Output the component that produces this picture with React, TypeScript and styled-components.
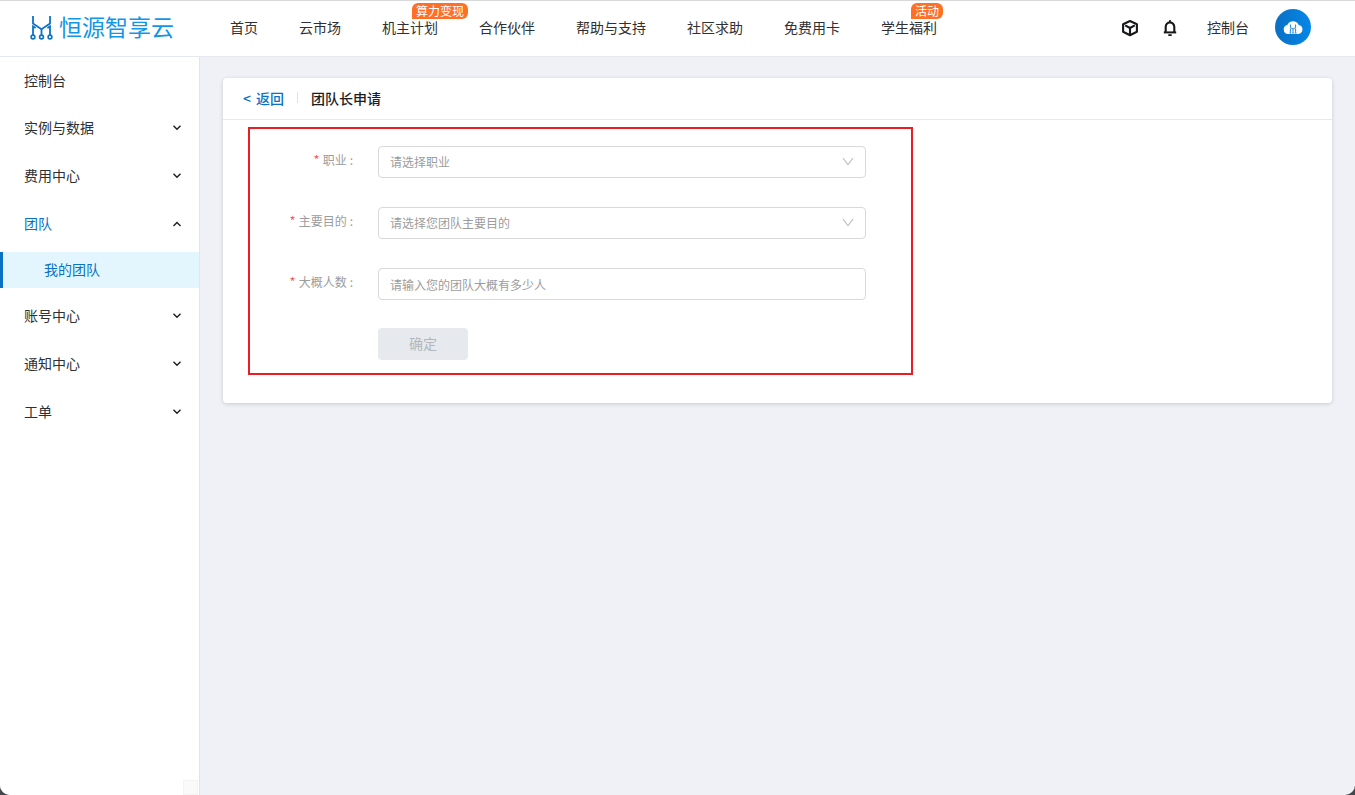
import React from "react";
import styled, { createGlobalStyle, css } from "styled-components";

const GlobalStyle = createGlobalStyle`
  *, *::before, *::after { box-sizing: border-box; }
  body {
    margin: 0;
    background: #43484d;
    color: #2f3033;
    font-family: "Noto Sans CJK SC", sans-serif;
    font-size: 14px;
    font-weight: 400;
    line-height: 20px;
  }
  button, input, select { font: inherit; color: inherit; }
  a { color: inherit; text-decoration: none; }
  svg { display: block; }
`;

const Shell = styled.div`
  display: flex;
  flex-direction: column;
  min-height: 100vh;
  overflow: hidden;
  background: #eff1f6;
  border-radius: 0 0 10px 10px;
`;

const Header = styled.header`
  display: flex;
  align-items: center;
  height: 57px;
  padding: 0 44px 4px 30px;
  background: #fff;
  border-top: 1px solid #d8d8d8;
  border-bottom: 1px solid #e6eaf0;
`;

const Brand = styled.a`
  display: flex;
  align-items: center;
  gap: 6px;
  width: 200px;
  padding-bottom: 2px;
  flex: none;
  font-size: 23px;
  line-height: 32px;
  color: #1296e8;
  white-space: nowrap;
`;

const Nav = styled.nav`
  display: flex;
  flex: 1;
  gap: 41px;
`;

const NavLink = styled.a`
  position: relative;
  line-height: 16px;
  white-space: nowrap;
`;

const Badge = styled.span`
  position: absolute;
  left: 30px;
  bottom: 16px;
  padding: 0 4px;
  border-radius: 6px 6px 6px 0;
  background: #ff6f26;
  color: #fff;
  font-size: 12px;
  line-height: 16px;
`;

const Tools = styled.div`
  display: flex;
  align-items: center;
`;

const IconButton = styled.button`
  width: 20px;
  height: 20px;
  margin-right: 20px;
  padding: 2px 1px 0;
  border: 0;
  background: none;
`;

const ConsoleLink = styled.a`
  margin: 0 26px 0 7px;
`;

const Avatar = styled.button`
  display: block;
  width: 36px;
  height: 36px;
  padding: 0;
  border: 0;
  border-radius: 50%;
  background: linear-gradient(90deg, #0a70c4, #0587e8);
`;

const Body = styled.div`
  display: flex;
  flex: 1;
`;

const Sidebar = styled.aside`
  display: flex;
  flex-direction: column;
  flex: none;
  width: 200px;
  background: #fff;
  border-right: 1px solid #e3e5ea;
`;

const MenuItem = styled.button<{ $active?: boolean; $first?: boolean }>`
  display: flex;
  align-items: center;
  justify-content: space-between;
  height: ${(p) => (p.$first ? 47 : 48)}px;
  padding: 0 17px 0 24px;
  border: 0;
  background: none;
  text-align: left;

  > span {
    padding-bottom: 2px;
    ${(p) => p.$active && css`color: #0a72c4;`}
  }
`;

const SubItem = styled.a`
  display: flex;
  align-items: center;
  height: 36px;
  margin: 4px 0;
  padding: 0 0 2px 41px;
  border-left: 3px solid #0a72c4;
  background: #e3f6fe;
  color: #0a72c4;
`;

const ScrollCorner = styled.div`
  width: 15px;
  height: 15px;
  margin-top: auto;
  margin-right: 1px;
  align-self: flex-end;
  background: #fafafa;
  border: 1px solid #f4f4f4;
`;

const Main = styled.main`
  flex: 1;
  min-width: 0;
  padding: 21px 23px 21px 23px;
`;

const Card = styled.section`
  background: #fff;
  border-radius: 4px;
  box-shadow: 0 1px 4px rgba(0, 0, 0, 0.16);
  padding-bottom: 28px;
`;

const CardHeader = styled.div`
  display: flex;
  align-items: center;
  height: 42px;
  padding: 0 20px 2px;
  border-bottom: 1px solid #e8e8e8;
  color: #1c1d1f;
  font-weight: 500;
`;

const BackLink = styled.a`
  display: flex;
  gap: 5px;
  color: #0a72c4;
`;

const Divider = styled.span`
  width: 1px;
  height: 11px;
  margin: 0 13px;
  background: #e0e2e6;
`;

const Title = styled.h1`
  margin: 0;
  font-size: 14px;
  font-weight: 500;
`;

const Form = styled.form`
  display: flex;
  flex-direction: column;
  gap: 29px;
  max-width: 665px;
  margin: 7px 25px 0;
  padding: 17px 45px 13px 0;
  border: 2px solid #ed1c24;
`;

const Field = styled.div`
  display: grid;
  grid-template-columns: 128px 1fr;
  height: 32px;
`;

const Label = styled.label`
  display: flex;
  justify-content: flex-end;
  gap: 3px;
  padding-right: 25px;
  color: #9c9c9c;
  font-size: 12px;
  line-height: 28px;
`;

const Star = styled.span`
  color: #ff5a5f;
  font-size: 13px;
`;

const SelectWrap = styled.div`
  position: relative;
`;

const control = css`
  display: block;
  width: 100%;
  height: 32px;
  padding: 0 11px 1px;
  border: 1px solid #d9d9d9;
  border-radius: 4px;
  background: #fff;
  color: #9c9c9c;
  font-size: 12px;
  outline: none;
`;

const Select = styled.select`
  ${control}
  appearance: none;
`;

const Input = styled.input`
  ${control}
  padding-top: 1px;
  &::placeholder { color: #9c9c9c; opacity: 1; }
`;

const SelectArrow = styled.svg`
  position: absolute;
  top: 10px;
  right: 12px;
  pointer-events: none;
`;

const Submit = styled.button`
  width: 90px;
  height: 32px;
  margin: -1px 0 0 128px;
  padding: 0 0 2px;
  border: 0;
  border-radius: 4px;
  background: #e6eaee;
  color: #b4b7ba;
`;

const LogoMark = () => (
  <svg width="23" height="28" viewBox="0 0 23 28" fill="none" stroke="#0c74c8" strokeWidth="1.8">
    <path d="M3 4v7.6L11.5 17.2 20 11.6V4" />
    <path d="M3 23.2V14.4L5.6 16M20 23.2V14.4L17.4 16M11.5 17v6.2" />
    <g fill="#fff" strokeWidth="1.6">
      <circle cx="3" cy="25" r="1.9" />
      <circle cx="11.5" cy="25" r="1.9" />
      <circle cx="20" cy="25" r="1.9" />
    </g>
  </svg>
);

const BoxIcon = () => (
  <svg width="18" height="18" viewBox="0 0 24 24" fill="none" stroke="#16181a" strokeWidth="2.8" strokeLinejoin="round">
    <path d="M12 2.6 21.2 7v10L12 21.6 2.8 17V7Z" />
    <path d="M5.6 8.4 12 12l6.4-3.6M12 12v8" />
  </svg>
);

const BellIcon = () => (
  <svg width="18" height="18" viewBox="0 0 18 18" fill="none" stroke="#16181a">
    <path d="M4.7 13V8a4.3 4.6 0 0 1 8.6 0v5" strokeWidth="2.1" />
    <path d="M2.8 13.4h12.4" strokeWidth="2" />
    <path d="M9 1v2.4M7.3 16.1h3.4" strokeWidth="1.6" />
  </svg>
);

const CloudIcon = () => (
  <svg width="36" height="36" viewBox="0 0 36 36">
    <path d="M13.2 25a4.5 4.5 0 0 1-.9-8.9 6.2 6.2 0 0 1 11.4-.2 4.6 4.6 0 0 1-.4 9.1Z" fill="#fff" />
    <path d="M15.4 15.5v3l2.6 1.6 2.6-1.6v-3M15.4 19.5v3.4M18 20.1v2.8M20.6 19.5v3.4" fill="none" stroke="#1584dc" strokeWidth="1" />
    <path d="M14.6 23.8h1.6M17.2 23.8h1.6M19.8 23.8h1.6" stroke="#1584dc" strokeWidth="1.2" />
  </svg>
);

const Chevron = ({ up }: { up?: boolean }) => (
  <svg width="10" height="10" viewBox="0 0 10 10" fill="none" stroke="#1c1d1f" strokeWidth="1.4">
    <path d={up ? "M1.5 7 5 3.5 8.5 7" : "M1.5 2.8 5 6.3 8.5 2.8"} />
  </svg>
);

const navItems: { text: string; badge?: string }[] = [
  { text: "首页" },
  { text: "云市场" },
  { text: "机主计划", badge: "算力变现" },
  { text: "合作伙伴" },
  { text: "帮助与支持" },
  { text: "社区求助" },
  { text: "免费用卡" },
  { text: "学生福利", badge: "活动" },
];

const FieldLabel = ({ id, text }: { id: string; text: string }) => (
  <Label htmlFor={id}>
    <Star>*</Star>
    <span>{text}</span>
    <span>:</span>
  </Label>
);

const SelectField = ({ id, label, hint }: { id: string; label: string; hint: string }) => (
  <Field>
    <FieldLabel id={id} text={label} />
    <SelectWrap>
      <Select id={id} defaultValue="">
        <option value="">{hint}</option>
      </Select>
      <SelectArrow width="12" height="12" viewBox="0 0 12 12" fill="none" stroke="#bfbfbf" strokeWidth="1.1">
        <path d="M1 2.2 6 8.6 11 2.2" />
      </SelectArrow>
    </SelectWrap>
  </Field>
);

const MenuGroup = ({ text, open }: { text: string; open?: boolean }) => (
  <MenuItem type="button" $active={open} aria-expanded={!!open}>
    <span>{text}</span>
    <Chevron up={open} />
  </MenuItem>
);

export default function App() {
  return (
    <>
      <GlobalStyle />
      <Shell>
        <Header>
          <Brand href="#">
            <LogoMark />
            <span>恒源智享云</span>
          </Brand>
          <Nav>
            {navItems.map((item) => (
              <NavLink key={item.text} href="#">
                {item.text}
                {item.badge && <Badge>{item.badge}</Badge>}
              </NavLink>
            ))}
          </Nav>
          <Tools>
            <IconButton type="button" aria-label="产品"><BoxIcon /></IconButton>
            <IconButton type="button" aria-label="通知"><BellIcon /></IconButton>
            <ConsoleLink href="#">控制台</ConsoleLink>
            <Avatar type="button" aria-label="账号"><CloudIcon /></Avatar>
          </Tools>
        </Header>
        <Body>
          <Sidebar>
            <MenuItem type="button" $first><span>控制台</span></MenuItem>
            <MenuGroup text="实例与数据" />
            <MenuGroup text="费用中心" />
            <MenuGroup text="团队" open />
            <SubItem href="#">我的团队</SubItem>
            <MenuGroup text="账号中心" />
            <MenuGroup text="通知中心" />
            <MenuGroup text="工单" />
            <ScrollCorner />
          </Sidebar>
          <Main>
            <Card>
              <CardHeader>
                <BackLink href="#"><span>&lt;</span><span>返回</span></BackLink>
                <Divider />
                <Title>团队长申请</Title>
              </CardHeader>
              <Form>
                <SelectField id="job" label="职业" hint="请选择职业" />
                <SelectField id="purpose" label="主要目的" hint="请选择您团队主要目的" />
                <Field>
                  <FieldLabel id="size" text="大概人数" />
                  <Input id="size" placeholder="请输入您的团队大概有多少人" />
                </Field>
                <Submit type="submit" disabled>确定</Submit>
              </Form>
            </Card>
          </Main>
        </Body>
      </Shell>
    </>
  );
}
